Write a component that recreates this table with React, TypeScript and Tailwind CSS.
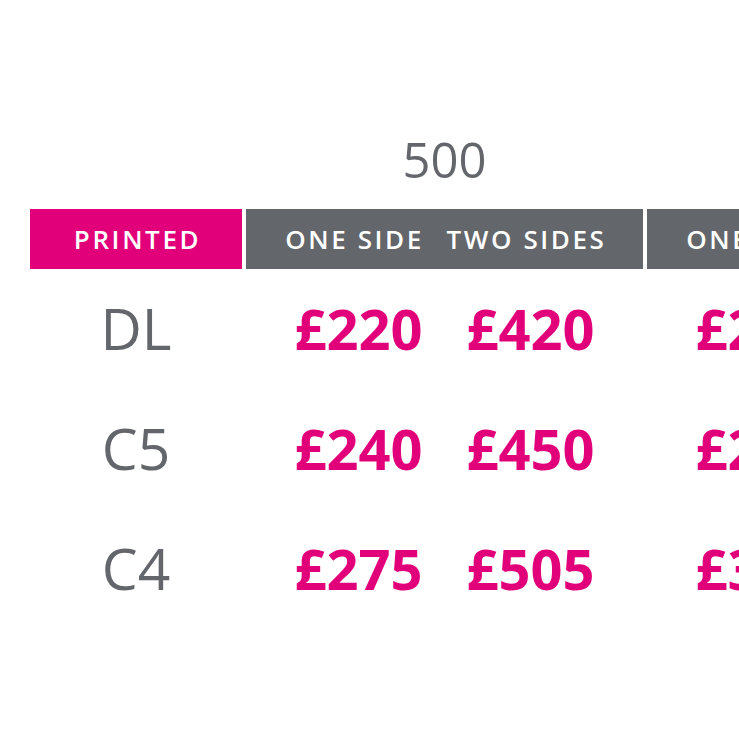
const pink = 'bg-[#e2007a]';

const groups = [
  { qty: '500', prices: [['£220', '£420'], ['£240', '£450'], ['£275', '£505']] },
  { qty: '1000', prices: [['£280', '£520'], ['£295', '£560'], ['£340', '£630']] },
];

const sizes = ['DL', 'C5', 'C4'];

export default function App() {
  return (
    <div className="w-[739px] h-[739px] overflow-hidden bg-white font-['Open_Sans',sans-serif]">
      <div className="pt-[124px] pl-[30px] w-max">
        {/* Quantity titles */}
        <div className="flex gap-1 h-[70px] mb-[15px]">
          <div className="w-[212px] shrink-0" />
          {groups.map((g) => (
            <div key={g.qty} className="w-[397px] shrink-0 flex items-center justify-center text-[49px] leading-none text-[#63666a]">
              {g.qty}
            </div>
          ))}
        </div>

        {/* Header row */}
        <div className="flex gap-1 h-[60px]">
          <div className={`w-[212px] shrink-0 ${pink} flex items-center justify-center pl-[3px] text-white text-[26px] font-semibold tracking-[0.1em] uppercase`}>
            Printed
          </div>
          {groups.map((g) => (
            <div key={g.qty} className="w-[397px] shrink-0 bg-[#63666a] flex items-center justify-center pr-[8px] text-white text-[26px] font-semibold tracking-[0.1em] uppercase">
              <div className="w-[172px] text-center">One side</div>
              <div className="w-[172px] text-center">Two sides</div>
            </div>
          ))}
        </div>

        {/* Price rows */}
        <div className="-mt-[1px]">
          {sizes.map((s, i) => (
            <div key={s} className="flex gap-1 h-[120px] items-center">
              <div className="w-[212px] shrink-0 text-center text-[57px] leading-none text-[#63666a]">{s}</div>
              {groups.map((g) => (
                <div key={g.qty} className="w-[397px] shrink-0 flex justify-center text-[56px] leading-none font-bold text-[#e2007a]">
                  <div className="w-[172px] text-center">{g.prices[i][0]}</div>
                  <div className="w-[172px] text-center">{g.prices[i][1]}</div>
                </div>
              ))}
            </div>
          ))}
        </div>
      </div>
    </div>
  );
}
